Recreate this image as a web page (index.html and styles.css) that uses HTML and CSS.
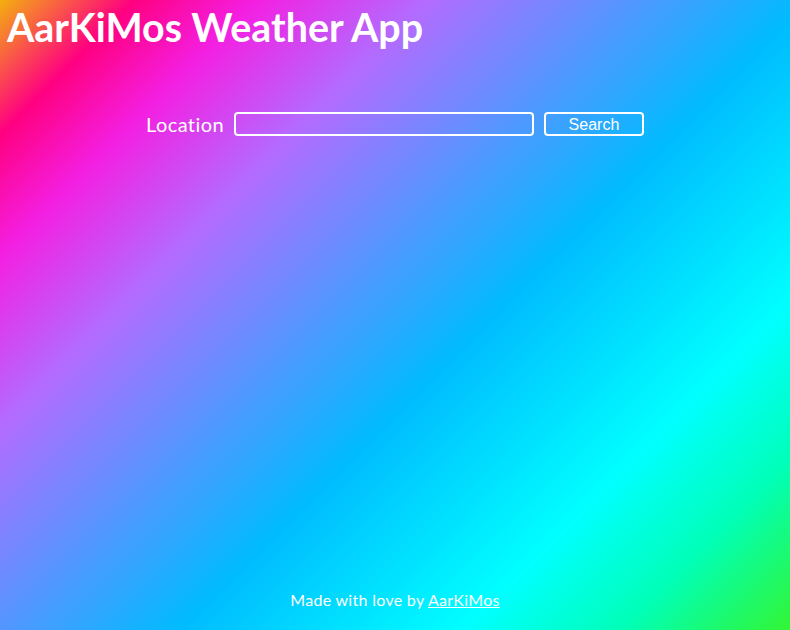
FILE: index.html
```html
<!DOCTYPE html>
<html lang="en">
<head>
<meta charset="utf-8">
<title>AarKiMos Weather App</title>
<link rel="stylesheet" href="styles.css">
</head>
<body>
<div class="page">
  <header class="header">
    <h1 class="title">AarKiMos Weather App</h1>
  </header>
  <main class="main">
    <form class="search-form">
      <label class="label" for="loc">Location</label>
      <input class="input" id="loc" type="text">
      <button class="button" type="button">Search</button>
    </form>
  </main>
  <footer class="footer">
    <p class="credit">Made with love by <a class="credit-link" href="#">AarKiMos</a></p>
  </footer>
</div>
</body>
</html>
```

FILE: styles.css
```css
html, body {
  margin: 0;
  padding: 0;
  height: 100%;
}

body {
  font-family: Lato, "Open Sans", sans-serif;
  color: #fff;
  background: linear-gradient(135deg,
    #f4b00f 0%,
    #ff0080 9.5%,
    #f41fe2 18%,
    #b36bff 30%,
    #00bcff 57%,
    #00ffff 77%,
    #00ffb8 88%,
    #33f533 100%);
}

.page {
  min-height: 100vh;
  display: flex;
  flex-direction: column;
}

.header {
  padding: 0 7px;
}

.title {
  margin: 0;
  padding-top: 4px;
  font-size: 39.4px;
  font-weight: 700;
  line-height: 46px;
}

.main {
  flex: 1;
  display: flex;
  justify-content: center;
  padding-top: 62px;
}

.search-form {
  display: flex;
  align-items: center;
  gap: 10px;
  height: 24px;
}

.label {
  font-size: 20px;
  letter-spacing: 0.4px;
}

.input {
  box-sizing: border-box;
  width: 300px;
  height: 24px;
  border: 2px solid #fff;
  border-radius: 4px;
  background: transparent;
  outline: none;
  color: #fff;
  margin: 0;
}

.button {
  box-sizing: border-box;
  width: 100px;
  height: 24px;
  border: 2px solid #fff;
  border-radius: 4px;
  background: transparent;
  color: #fff;
  font-family: "Liberation Sans", Arial, sans-serif;
  font-size: 16px;
  line-height: 20px;
  padding: 1px 0 0;
  margin: 0;
}

.footer {
  display: flex;
  justify-content: center;
  padding-bottom: 20px;
}

.credit {
  margin: 0;
  font-size: 16px;
  letter-spacing: 0.3px;
  line-height: 20px;
}

.credit-link {
  color: #fff;
}
```
